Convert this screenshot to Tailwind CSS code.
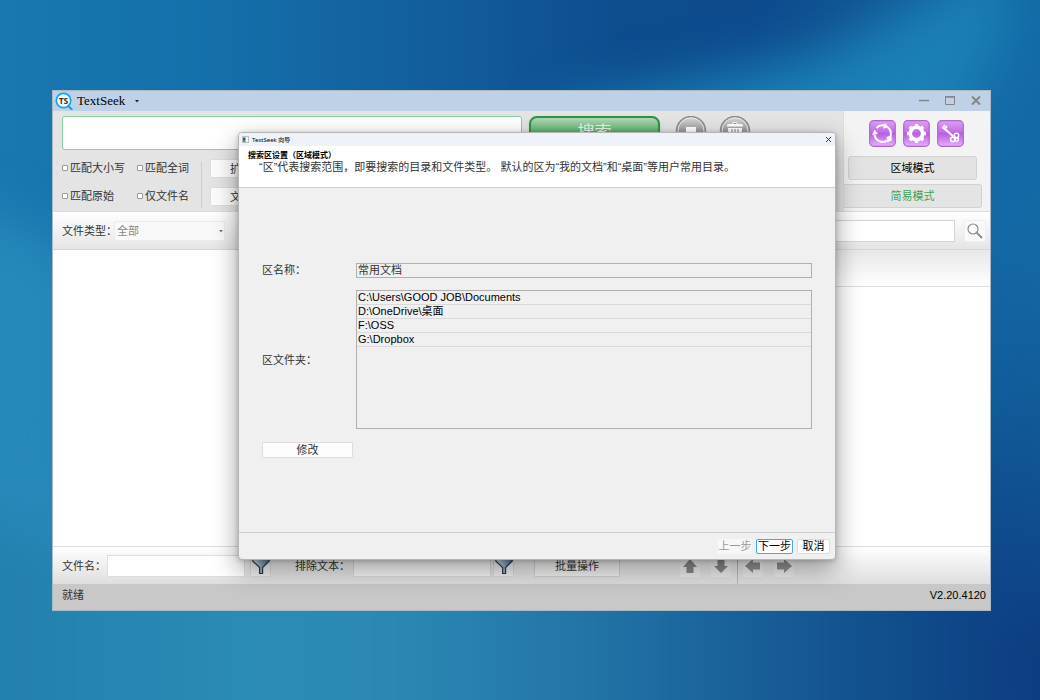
<!DOCTYPE html>
<html lang="zh-CN">
<head>
<meta charset="utf-8">
<title>TextSeek</title>
<script src="https://cdn.jsdelivr.net/npm/@tailwindcss/browser@4"></script>
</head>
<body class="relative min-h-screen overflow-hidden bg-[#1873ac] font-['Liberation_Sans','Noto_Sans_CJK_SC',sans-serif] text-[11px] leading-4 text-[#333]">

<!-- Desktop wallpaper -->
<svg class="absolute inset-0 h-full w-full" viewBox="0 0 1040 700" preserveAspectRatio="none" aria-hidden="true">
  <defs>
    <linearGradient id="sky" x1="0" y1="0" x2="1" y2="0">
      <stop offset="0" stop-color="#1878b0"/><stop offset=".2" stop-color="#1470aa"/><stop offset=".4" stop-color="#135f9e"/><stop offset=".6" stop-color="#0d4d8e"/><stop offset=".72" stop-color="#0d4b8d"/><stop offset="1" stop-color="#15649f"/>
    </linearGradient>
    <linearGradient id="sea" gradientUnits="userSpaceOnUse" x1="0" y1="0" x2="1040" y2="0">
      <stop offset="0" stop-color="#2380ae"/><stop offset=".25" stop-color="#2b8cb5"/><stop offset=".38" stop-color="#2b88b3"/><stop offset=".55" stop-color="#2376a8"/><stop offset=".72" stop-color="#185f98"/><stop offset=".88" stop-color="#0f4b8a"/><stop offset="1" stop-color="#0d3c80"/>
    </linearGradient>
    <linearGradient id="side" gradientUnits="userSpaceOnUse" x1="0" y1="90" x2="0" y2="620">
      <stop offset="0" stop-color="#1269a6"/><stop offset=".3" stop-color="#1469a5"/><stop offset=".6" stop-color="#115a98"/><stop offset="1" stop-color="#0d4285"/>
    </linearGradient>
    <filter id="soft" filterUnits="userSpaceOnUse" x="-200" y="-200" width="1440" height="1100" color-interpolation-filters="sRGB"><feGaussianBlur stdDeviation="26"/></filter>
  </defs>
  <rect width="1040" height="700" fill="url(#sky)"/>
  <g filter="url(#soft)">
    <rect x="-200" y="460" width="1440" height="440" fill="url(#sea)"/>
    <path d="M-150 190Q40 210 80 270L80 550L-150 470Z" fill="#2789ba"/>
    <path d="M560 110L820 55L960-20L1010-60V150H560Z" fill="#1b80b5"/>
    <path d="M960 130L1030-20H1200V620H960Z" fill="url(#side)"/>
  </g>
</svg>

<!-- Application window -->
<main class="absolute top-[90px] right-[49px] bottom-[89px] left-[52px] flex flex-col border border-[#aab9c6] bg-white">
  <header class="flex h-5 shrink-0 items-center bg-[#bed1e7] pr-2 pl-0.5">
    <svg class="h-[18px] w-[18px]" viewBox="0 0 18 18" aria-hidden="true">
      <path d="M13 14L16.500 17" stroke="#12a5ee" stroke-width="2.200" stroke-linecap="round"/>
      <circle cx="8.500" cy="8.500" r="7.200" fill="#fff" stroke="#12a5ee" stroke-width="1.700"/>
      <text x="8.500" y="11.500" text-anchor="middle" font-family="Open Sans, sans-serif" font-size="8.500" font-weight="700" fill="#333">TS</text>
    </svg>
    <h1 class="ml-1 font-['Liberation_Serif',serif] text-[13px] text-black">TextSeek</h1>
    <button aria-label="菜单" class="ml-2 grid h-4 w-2 place-items-center"><svg class="h-1 w-1" viewBox="0 0 4 4"><path d="M0 1H4L2 3.500Z" fill="#223"/></svg></button>
    <div class="ml-auto flex items-center gap-[14px] text-[#858585]">
      <button aria-label="最小化"><svg class="h-3 w-3" viewBox="0 0 12 12"><path d="M1 5.500H11" stroke="currentColor" stroke-width="1.500"/></svg></button>
      <button aria-label="最大化"><svg class="h-3 w-3" viewBox="0 0 12 12"><path d="M1.500 2H10.500V9.500H1.500Z" fill="none" stroke="currentColor" stroke-width="1"/><path d="M1 1.800H11" stroke="currentColor" stroke-width="1.500"/></svg></button>
      <button aria-label="关闭"><svg class="h-3 w-3" viewBox="0 0 12 12"><path d="M2 1.500L10 9.500M10 1.500L2 9.500" stroke="currentColor" stroke-width="1.900"/></svg></button>
    </div>
  </header>

  <section class="flex h-[101px] shrink-0 border-b border-[#ddd] bg-[#e4e4e4]">
    <div class="flex grow flex-col pt-[5px] pl-[9px]">
      <div class="flex">
        <input aria-label="搜索内容" class="h-[34px] w-[460px] rounded-[3px] border border-[#88d0a0] bg-white px-2 outline-none">
        <button class="ml-[7px] h-[34px] w-[131px] rounded-lg border-2 border-[#2c9540] bg-linear-to-b from-[#b2d9b8] via-[#4fae64] to-[#2b9b48] text-[17px] text-[#e4f3e6] shadow">搜索</button>
        <button aria-label="停止" class="ml-[15px] h-8"><svg class="h-8 w-8" viewBox="0 0 32 32">
          <defs><linearGradient id="disc" x1="0" y1="0" x2="0" y2="1"><stop offset="0" stop-color="#ddd"/><stop offset=".5" stop-color="#999"/><stop offset="1" stop-color="#bbb"/></linearGradient></defs>
          <circle cx="16" cy="15" r="14.500" fill="url(#disc)" stroke="#8d8d8d" stroke-width="1.500"/><circle cx="16" cy="15" r="13" fill="none" stroke="#e6e6e6" stroke-width="1"/><path d="M11 11H21V21H11Z" fill="#fff"/></svg></button>
        <button aria-label="清除" class="ml-3 h-8"><svg class="h-8 w-8" viewBox="0 0 32 32">
          <circle cx="16" cy="15" r="14.500" fill="url(#disc)" stroke="#8d8d8d" stroke-width="1.500"/><circle cx="16" cy="15" r="13" fill="none" stroke="#e6e6e6" stroke-width="1"/>
          <path d="M8 9.500Q8 8 10 8H13Q13 6 16 6T19 8H22Q24 8 24 9.500V10.500H8Z M9 12H23L22 25H10Z" fill="#fff"/><path d="M14.500 7.500H17.500M13 13V23M16 13V23M19 13V23" stroke="#909090" stroke-width="1.200"/></svg></button>
      </div>
      <div class="mt-2 flex">
        <div class="grid grid-cols-[75px_64px] content-start gap-y-3 pt-0.5">
          <label class="flex items-center gap-0.5 whitespace-nowrap"><input type="checkbox" class="h-1.5 w-1.5 appearance-none rounded-[1px] border border-[#999] bg-white">匹配大小写</label>
          <label class="flex items-center gap-0.5 whitespace-nowrap"><input type="checkbox" class="h-1.5 w-1.5 appearance-none rounded-[1px] border border-[#999] bg-white">匹配全词</label>
          <label class="flex items-center gap-0.5 whitespace-nowrap"><input type="checkbox" class="h-1.5 w-1.5 appearance-none rounded-[1px] border border-[#999] bg-white">匹配原始</label>
          <label class="flex items-center gap-0.5 whitespace-nowrap"><input type="checkbox" class="h-1.5 w-1.5 appearance-none rounded-[1px] border border-[#999] bg-white">仅文件名</label>
        </div>
        <div class="mt-1 h-[46px] w-px bg-[#ccc]"></div>
        <div class="ml-2 flex flex-col gap-[9px] pt-px">
          <button class="h-[19px] w-[90px] rounded-[1px] border border-[#ddd] bg-[#fcfcfc] pl-[19px] text-left">扩</button>
          <button class="h-[19px] w-[90px] rounded-[1px] border border-[#ddd] bg-[#fcfcfc] pl-[19px] text-left">文</button>
        </div>
      </div>
    </div>
    <aside class="flex w-[147px] shrink-0 flex-col border-l border-[#ddd] bg-[#f3f3f3] pt-[9px]">
      <div class="flex gap-[7px] pl-[25px]">
        <button aria-label="刷新索引"><svg class="h-[27px] w-[27px]" viewBox="0 0 27 27">
          <defs><linearGradient id="gem" x1="0" y1="0" x2="0" y2="1"><stop offset="0" stop-color="#dba0f2"/><stop offset=".45" stop-color="#c36be8"/><stop offset=".5" stop-color="#b85edf"/><stop offset="1" stop-color="#e7aefd"/></linearGradient></defs>
          <rect x=".7" y=".7" width="25.600" height="25.600" rx="4" fill="url(#gem)" stroke="#ab69c8" stroke-width="1.200"/>
          <g fill="none" stroke="#fff" stroke-width="2"><path d="M7.500 8A8.300 8.300 0 0 1 16.500 5.800"/><path d="M19 7.500A8.300 8.300 0 0 1 21.500 16"/><path d="M17.500 21A8.300 8.300 0 0 1 5.500 15"/></g>
          <path d="M14 8.500L20 7.500L16 3Z M18 22.500L22.800 20.500L22.500 15L17.500 17Z M3 15L5.500 9.500L9 14Z" fill="#fff"/></svg></button>
        <button aria-label="设置"><svg class="h-[27px] w-[27px]" viewBox="0 0 27 27">
          <rect x=".7" y=".7" width="25.600" height="25.600" rx="4" fill="url(#gem)" stroke="#ab69c8" stroke-width="1.200"/>
          <circle cx="13.500" cy="13.500" r="6.200" fill="none" stroke="#fff" stroke-width="3.600"/>
          <g stroke="#fff" stroke-width="3.400"><path d="M13.500 4V7M13.500 20V23M4 13.500H7M20 13.500H23M6.800 6.800L9 9M18 18L20.200 20.200M6.800 20.200L9 18M18 9L20.200 6.800"/></g></svg></button>
        <button aria-label="密钥"><svg class="h-[27px] w-[27px]" viewBox="0 0 27 27">
          <rect x=".7" y=".7" width="25.600" height="25.600" rx="4" fill="url(#gem)" stroke="#ab69c8" stroke-width="1.200"/>
          <g fill="none" stroke="#fff"><path d="M5.500 7L16.500 16.500" stroke-width="2.200"/><path d="M8 9L10 6M5.500 8L8 5" stroke-width="1.800"/><circle cx="19.500" cy="15.500" r="2.200" stroke-width="1.500"/><circle cx="15.800" cy="19.500" r="2.200" stroke-width="1.500"/><circle cx="19.700" cy="19.500" r="1.700" stroke-width="1.500"/></g></svg></button>
      </div>
      <button class="mt-[9px] ml-1 h-6 w-[129px] rounded-[3px] border border-[#d2d2d2] bg-[#e3e3e3] text-black">区域模式</button>
      <button class="mt-1 h-6 w-[138px] rounded-r-[3px] border border-l-0 border-[#d2d2d2] bg-[#e4e4e4] text-[#3da556]">简易模式</button>
    </aside>
  </section>

  <section class="flex h-[38px] shrink-0 items-center border-b border-[#d5d5d5] bg-linear-to-b from-white to-[#e5e5e5] pr-1 pl-[9px]">
    <label for="ft" class="w-[52px] whitespace-nowrap">文件类型：</label>
    <span class="relative flex items-center">
      <select id="ft" class="h-5 w-[111px] appearance-none rounded-[1px] border border-[#ececec] bg-[#f9f9f9] px-0.5 text-[#858585]"><option>全部</option></select>
      <svg class="pointer-events-none absolute right-0.5 h-1 w-1" viewBox="0 0 4 4"><path d="M0 1H4L2 3.500Z" fill="#777"/></svg>
    </span>
    <input aria-label="筛选结果" class="ml-auto h-[22px] w-[200px] border border-[#d4d4d4] bg-white outline-none">
    <button aria-label="查找" class="ml-[9px] grid h-[22px] w-[22px] place-items-center rounded-[2px] border border-[#eee] bg-[#fafafa]">
      <svg class="h-4 w-4" viewBox="0 0 16 16" fill="none" stroke="#8a8a8a"><circle cx="6" cy="6" r="5" stroke-width="1.200"/><path d="M9.700 9.700L15 15" stroke-width="1.800"/></svg></button>
  </section>

  <section class="flex min-h-0 grow">
    <div class="w-1/2 bg-white"></div>
    <div class="w-1/2 bg-white"><div class="h-[37px] border-b border-[#ddd] bg-linear-to-b from-[#e8e8e8] to-white"></div></div>
  </section>

  <section class="flex h-[38px] shrink-0 items-center border-t border-[#ddd] bg-linear-to-b from-white to-[#dedede] pl-[9px]">
    <label for="fn" class="w-[45px] whitespace-nowrap">文件名：</label>
    <input id="fn" class="h-[22px] w-[138px] border border-[#ddd] bg-white outline-none">
    <button aria-label="过滤文件名" class="ml-[5px] grid h-[22px] w-[21px] place-items-center border border-[#ddd] bg-[#f2f2f2]">
      <svg class="h-[18px] w-[18px]" viewBox="0 0 18 18"><defs><linearGradient id="fun"><stop offset="0" stop-color="#dfeaf5"/><stop offset="1" stop-color="#55779b"/></linearGradient></defs><path d="M.8 1H17.200V4L10.600 10.500V16.500H7.600V10.500L.8 4Z" fill="url(#fun)" stroke="#2b3b4b" stroke-width="1.200"/></svg></button>
    <label for="ex" class="ml-6 w-[58px] whitespace-nowrap">排除文本：</label>
    <input id="ex" class="h-[22px] w-[138px] border border-[#ddd] bg-[#fafafa] outline-none">
    <button aria-label="过滤文本" class="ml-0.5 grid h-[22px] w-[21px] place-items-center border border-[#ddd] bg-[#f2f2f2]">
      <svg class="h-[18px] w-[18px]" viewBox="0 0 18 18"><path d="M.8 1H17.200V4L10.600 10.500V16.500H7.600V10.500L.8 4Z" fill="url(#fun)" stroke="#2b3b4b" stroke-width="1.200"/></svg></button>
    <button class="ml-5 h-[22px] w-[86px] rounded-[1px] border border-[#d4d4d4] bg-[#f4f4f4]">批量操作</button>
    <div class="ml-[60px] flex items-center gap-[11px] text-[#8a8a8a]">
      <button aria-label="上移" class="grid h-[22px] w-5 place-items-center bg-white/30"><svg class="h-4 w-4" viewBox="0 0 16 16"><path d="M8 1L15 9H11.500V15H4.500V9H1Z" fill="currentColor"/></svg></button>
      <button aria-label="下移" class="grid h-[22px] w-5 place-items-center bg-white/30"><svg class="h-4 w-4" viewBox="0 0 16 16"><path d="M8 15L15 8H11.500V1H4.500V8H1Z" fill="currentColor"/></svg></button>
    </div>
    <div class="ml-[6px] h-full w-px bg-[#bbb]"></div>
    <div class="ml-[5px] flex items-center gap-[11px] text-[#929292]">
      <button aria-label="后退" class="grid h-[22px] w-5 place-items-center bg-white/30"><svg class="h-4 w-4" viewBox="0 0 16 16"><path d="M0 8L8 1V4.500H15V11.500H8V15Z" fill="currentColor"/></svg></button>
      <button aria-label="前进" class="grid h-[22px] w-5 place-items-center bg-white/30"><svg class="h-4 w-4" viewBox="0 0 16 16"><path d="M16 8L8 1V4.500H1V11.500H8V15Z" fill="currentColor"/></svg></button>
    </div>
  </section>

  <footer class="flex h-[26px] shrink-0 items-center justify-between bg-[#c8c8c8] px-[9px] pr-1 pb-1">
    <span>就绪</span><span class="text-black">V2.20.4120</span>
  </footer>
</main>

<!-- Wizard dialog -->
<section role="dialog" aria-label="TextSeek 向导" class="absolute top-[132px] left-[238px] flex h-[428px] w-[598px] flex-col overflow-hidden rounded-[4px] border border-[#b5b5b5] bg-[#f0f0f0] shadow-[0_10px_26px_rgba(0,0,0,0.38),0_1px_5px_rgba(0,0,0,0.2)]">
  <header class="flex h-[13px] shrink-0 items-center bg-[#eff3f9] px-[3px] pr-1 font-['Noto_Sans','Noto_Sans_CJK_SC',sans-serif] text-[6px] leading-3 text-black">
    <svg class="mr-[3px] h-[7px] w-[7px]" viewBox="0 0 7 7" aria-hidden="true"><path d="M.5.5H6.500V6.500H.5Z" fill="#f4f4f4" stroke="#999" stroke-width=".6"/><path d="M1 1.500H3.500V4H1Z" fill="#1761a3"/><path d="M1 4H3.500V6H1Z" fill="#3da34f"/></svg>
    TextSeek 向导
    <button aria-label="关闭向导" class="ml-auto"><svg class="h-[5px] w-[5px]" viewBox="0 0 5 5"><path d="M0 0L5 5M5 0L0 5" stroke="#222" stroke-width=".9"/></svg></button>
  </header>
  <div class="h-[42px] shrink-0 border-b border-[#cfcfcf] bg-white pt-1 pl-[9px]">
    <h2 class="text-[8px] leading-3 font-bold text-black">搜索区设置（区域模式）</h2>
    <p class="pl-[11px] leading-[11px] whitespace-nowrap">“区”代表搜索范围，即要搜索的目录和文件类型。 默认的区为“我的文档”和“桌面”等用户常用目录。</p>
  </div>
  <div class="grow px-[23px] pt-[74px]">
    <div class="grid grid-cols-[94px_1fr] items-center gap-y-3">
      <label for="zn">区名称：</label>
      <input id="zn" value="常用文档" readonly class="h-[15px] w-full border border-[#b0b0b0] bg-[#f0f0f0] px-px outline-none">
      <span id="zf">区文件夹：</span>
      <ul aria-labelledby="zf" class="h-[139px] border border-[#b0b0b0] leading-[13px] text-black">
        <li class="h-3.5 border-b border-[#dadada] pl-px">C:\Users\GOOD JOB\Documents</li>
        <li class="h-3.5 border-b border-[#dadada] pl-px">D:\OneDrive\桌面</li>
        <li class="h-3.5 border-b border-[#dadada] pl-px">F:\OSS</li>
        <li class="h-3.5 border-b border-[#dadada] pl-px">G:\Dropbox</li>
      </ul>
    </div>
    <button class="mt-[13px] h-4 w-[91px] rounded-[1px] border border-[#ddd] bg-[#fdfdfd] leading-3">修改</button>
  </div>
  <footer class="flex h-[27px] shrink-0 items-center justify-end gap-1 border-t border-[#cfcfcf] pr-[5px] leading-3">
    <button disabled class="h-[15px] w-[34px] rounded-[1px] bg-[#f7f7f7] whitespace-nowrap text-[#999]">上一步</button>
    <button class="h-[15px] w-[37px] rounded-[2px] border border-[#4ea3e0] bg-[#fdfdfd] whitespace-nowrap text-black">下一步</button>
    <button class="h-[15px] w-[33px] rounded-[2px] border border-[#ddd] bg-[#fdfdfd] whitespace-nowrap text-black">取消</button>
  </footer>
</section>
</body>
</html>
